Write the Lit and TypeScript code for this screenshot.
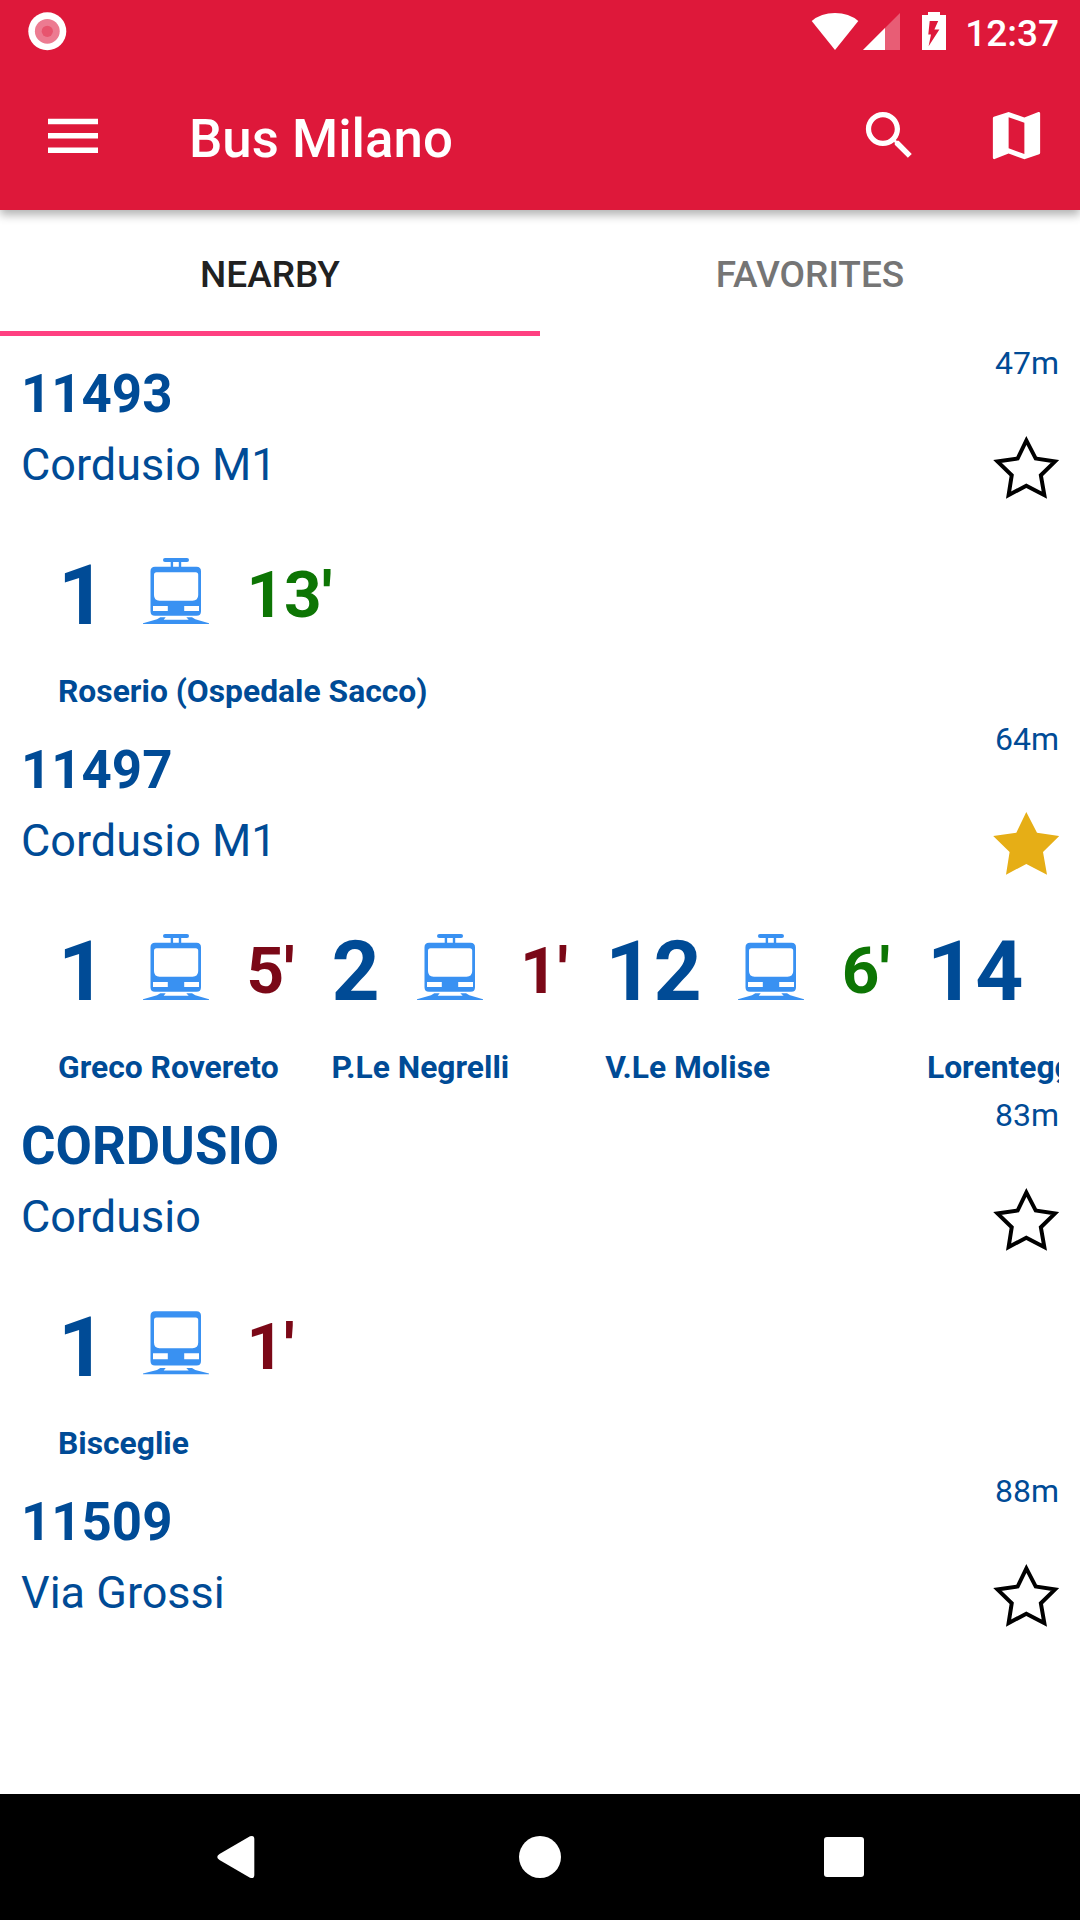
import { LitElement, html, svg, css, nothing } from "lit";
import { customElement, property } from "lit/decorators.js";
import { classMap } from "lit/directives/class-map.js";

interface Arrival {
  line: string;
  vehicle: "tram" | "metro";
  wait?: string;
  soon?: boolean;
  destination: string;
}

interface Stop {
  code: string;
  name: string;
  distance: string;
  favorite: boolean;
  arrivals: Arrival[];
}

const STOPS: Stop[] = [
  {
    code: "11493",
    name: "Cordusio M1",
    distance: "47m",
    favorite: false,
    arrivals: [{ line: "1", vehicle: "tram", wait: "13'", destination: "Roserio (Ospedale Sacco)" }],
  },
  {
    code: "11497",
    name: "Cordusio M1",
    distance: "64m",
    favorite: true,
    arrivals: [
      { line: "1", vehicle: "tram", wait: "5'", soon: true, destination: "Greco Rovereto" },
      { line: "2", vehicle: "tram", wait: "1'", soon: true, destination: "P.Le Negrelli" },
      { line: "12", vehicle: "tram", wait: "6'", destination: "V.Le Molise" },
      { line: "14", vehicle: "tram", destination: "Lorenteggio" },
    ],
  },
  {
    code: "CORDUSIO",
    name: "Cordusio",
    distance: "83m",
    favorite: false,
    arrivals: [{ line: "1", vehicle: "metro", wait: "1'", soon: true, destination: "Bisceglie" }],
  },
  { code: "11509", name: "Via Grossi", distance: "88m", favorite: false, arrivals: [] },
];

const STAR = "33.3,0 44,20.7 66.3,24 50,40 54,62.7 33.3,52 13,62.7 16.6,40 0.2,24 23.3,20.7";

const tramIcon = svg`
  <rect x="20" y="0" width="26" height="4" rx="2"/>
  <rect x="27.7" y="3" width="2.4" height="7"/>
  <rect x="35.8" y="3" width="2.4" height="7"/>
  <path fill-rule="evenodd" d="M12 8.7H53.5Q58 8.7 58 13.2V53.2Q58 57.7 53.5 57.7H12Q7.5 57.7 7.5 53.2V13.2Q7.5 8.7 12 8.7ZM13.5 14.2Q11 14.2 11 16.7V37Q11 42.7 16.5 42.7H49.5Q55.2 42.7 55.2 37V16.7Q55.2 14.2 52.7 14.2ZM10 48V53H24.8V48ZM41.2 48V53H56V48Z"/>
  <path d="M0 66V65.2L14 61.3L17.3 59.3H22.7L20.7 61.8H45.7L43.3 59.3H49L52.3 61.3L66 65.2V66Z"/>`;

const metroIcon = svg`
  <path fill-rule="evenodd" d="M12 1.3H53.5Q58 1.3 58 5.8V51.1Q58 55.6 53.5 55.6H12Q7.5 55.6 7.5 51.1V5.8Q7.5 1.3 12 1.3ZM13.5 7.6Q11 7.6 11 10.1V32.6Q11 38.3 16.5 38.3H49.5Q55.2 38.3 55.2 32.6V10.1Q55.2 7.6 52.7 7.6ZM10 43.3V49.3H24.8V43.3ZM41.2 43.3V49.3H56V43.3Z"/>
  <path d="M0 64.3V63.5L14 59.9L17.3 57.9H22.7L20.7 60.4H45.7L43.3 57.9H49L52.3 59.9L66 63.5V64.3Z"/>`;

@customElement("status-bar")
class StatusBar extends LitElement {
  static styles = css`
    :host { display: flex; height: 63px; padding: 0 21px 0 28px; justify-content: space-between; box-sizing: border-box; }
    svg { display: block; }
    .right { display: flex; }
    .clock { font-size: 37px; line-height: 43px; font-weight: 500; padding-top: 12px; margin-left: 18.5px; }
  `;
  render() {
    return html`
      <svg width="39" height="63" viewBox="0 0 39 63">
        <circle cx="19.3" cy="31.3" r="19" fill="#fff"/>
        <circle cx="19.3" cy="31.3" r="12.4" fill="#ec7b91"/>
        <circle cx="19.3" cy="31.3" r="5.6" fill="#e7546e"/>
      </svg>
      <div class="right">
        <svg width="136" height="63" viewBox="811 0 136 63" fill="#fff">
          <path d="M835 50L811.7 21Q821 13 835 13T858.3 21Z"/>
          <path d="M863 50L900 13V50Z" opacity=".3"/>
          <path d="M863 50L885 28V50Z"/>
          <path fill-rule="evenodd" d="M928 12H940V15H946V50H922V15H928ZM929.7 21L928.3 34.5H931L928.6 46.3L939.4 29.6H934.4L938.2 21Z"/>
        </svg>
        <div class="clock">12:37</div>
      </div>`;
  }
}

@customElement("app-bar")
class AppBar extends LitElement {
  static styles = css`
    :host { display: flex; height: 147px; padding: 0 32px 0 42px; box-sizing: border-box; align-items: flex-start; }
    svg { display: block; margin-top: 41px; }
    .title { flex: 1; margin: 0 0 0 84px; padding-top: 45px; font-size: 52.8px; line-height: 62px; font-weight: 500; }
    .map { margin-left: 64px; }
  `;
  render() {
    return html`
      <svg width="63" height="63" viewBox="42 104 63 63" fill="#fff">
        <path d="M48 118.7H98V124.2H48ZM48 133.1H98V138.6H48ZM48 147.4H98V152.9H48Z"/>
      </svg>
      <h1 class="title">Bus Milano</h1>
      <svg width="63" height="63" viewBox="0 0 24 24" fill="#fff">
        <path d="M15.5 14h-.79l-.28-.27C15.41 12.59 16 11.11 16 9.5 16 5.91 13.09 3 9.5 3S3 5.91 3 9.5 5.91 16 9.5 16c1.61 0 3.09-.59 4.23-1.57l.27.28v.79l5 4.99L20.49 19l-4.99-5zm-6 0C7.01 14 5 11.99 5 9.5S7.01 5 9.5 5 14 7.01 14 9.5 11.99 14 9.5 14z"/>
      </svg>
      <svg class="map" width="63" height="63" viewBox="0 0 24 24" fill="#fff">
        <path d="M20.5 3l-.16.03L15 5.1 9 3 3.36 4.9c-.21.07-.36.25-.36.48V20.5c0 .28.22.5.5.5l.16-.03L9 18.9l6 2.1 5.64-1.9c.21-.07.36-.25.36-.48V3.5c0-.28-.22-.5-.5-.5zM15 19l-6-2.11V5l6 2.11V19z"/>
      </svg>`;
  }
}

@customElement("tab-strip")
class TabStrip extends LitElement {
  static styles = css`
    :host { display: grid; grid-template-columns: 1fr 1fr; height: 126px; }
    .tab { box-sizing: border-box; padding-top: 43px; text-align: center; font-size: 37px; line-height: 43px; font-weight: 500; color: #757575; }
    .active { color: #212121; border-bottom: 5px solid #ff4081; }
  `;
  render() {
    return html`<div class="tab active">NEARBY</div><div class="tab">FAVORITES</div>`;
  }
}

@customElement("stop-item")
class StopItem extends LitElement {
  @property({ attribute: false }) stop!: Stop;

  static styles = css`
    :host { display: block; height: 376px; padding: 0 21px; box-sizing: border-box; color: #004b96; }
    .head { display: flex; justify-content: space-between; height: 210px; }
    .code { padding-top: 27px; font-size: 52.8px; line-height: 62px; font-weight: 700; }
    .name { padding-top: 12px; font-size: 45px; line-height: 56px; }
    .side { display: flex; flex-direction: column; align-items: flex-end; }
    .distance { padding-top: 8px; font-size: 32px; line-height: 38px; }
    .star { display: block; margin-top: 53.8px; }
    .arrivals { display: flex; padding-left: 37px; overflow: hidden; }
    .arrival { flex: none; }
    .row { display: flex; height: 98px; padding-right: 37px; }
    .line { font-size: 84px; line-height: 98px; font-weight: 700; padding-top: 1px; }
    .vehicle { display: block; margin: 12px 37.4px 0 36.8px; fill: #3991f2; }
    .wait { font-size: 65.6px; line-height: 78px; padding-top: 10px; font-weight: 700; color: #0d7504; }
    .soon { color: #7b0817; }
    .destination { margin-top: 28px; font-size: 31.8px; line-height: 38px; font-weight: 700; white-space: nowrap; }
  `;

  render() {
    const s = this.stop;
    return html`
      <div class="head">
        <div>
          <div class="code">${s.code}</div>
          <div class="name">${s.name}</div>
        </div>
        <div class="side">
          <div class="distance">${s.distance}</div>
          <svg class="star" width="66" height="63" viewBox="0 0 66 63">
            ${s.favorite
              ? svg`<polygon points=${STAR} fill="#e6ae16"/>`
              : svg`<clipPath id="edge"><polygon points=${STAR}/></clipPath>
                <polygon points=${STAR} fill="none" stroke="#000" stroke-width="8" clip-path="url(#edge)"/>`}
          </svg>
        </div>
      </div>
      <div class="arrivals">
        ${s.arrivals.map(
          (a) => html`<div class="arrival">
            <div class="row">
              <div class="line">${a.line}</div>
              <svg class="vehicle" width="66" height="66" viewBox="0 0 66 66">
                ${a.vehicle === "tram" ? tramIcon : metroIcon}
              </svg>
              ${a.wait ? html`<div class=${classMap({ wait: true, soon: !!a.soon })}>${a.wait}</div>` : nothing}
            </div>
            <div class="destination">${a.destination}</div>
          </div>`
        )}
      </div>`;
  }
}

@customElement("nav-bar")
class NavBar extends LitElement {
  static styles = css`
    :host { display: flex; height: 126px; background: #000; align-items: center; justify-content: center; }
    svg { display: block; }
  `;
  render() {
    return html`<svg width="1080" height="126" viewBox="0 0 1080 126" fill="#fff">
      <path d="M219.5 60L250 42.3Q254.3 40.8 254.3 45V81Q254.3 85.2 250 83.7L219.5 66Q215 63 219.5 60Z"/>
      <circle cx="540" cy="63" r="21"/>
      <rect x="824" y="43" width="40" height="40" rx="3"/>
    </svg>`;
  }
}

@customElement("app-root")
class AppRoot extends LitElement {
  static styles = css`
    :host { display: flex; flex-direction: column; width: 1080px; height: 1920px; overflow: hidden; background: #fff; font-family: Roboto, sans-serif; }
    .header { position: relative; z-index: 1; background: #de183a; color: #fff; box-shadow: 0 5px 9px rgba(0, 0, 0, 0.3); }
    .list { flex: 1; min-height: 0; overflow: hidden; }
  `;
  render() {
    return html`
      <header class="header"><status-bar></status-bar><app-bar></app-bar></header>
      <tab-strip></tab-strip>
      <main class="list">${STOPS.map((s) => html`<stop-item .stop=${s}></stop-item>`)}</main>
      <nav-bar></nav-bar>`;
  }
}
